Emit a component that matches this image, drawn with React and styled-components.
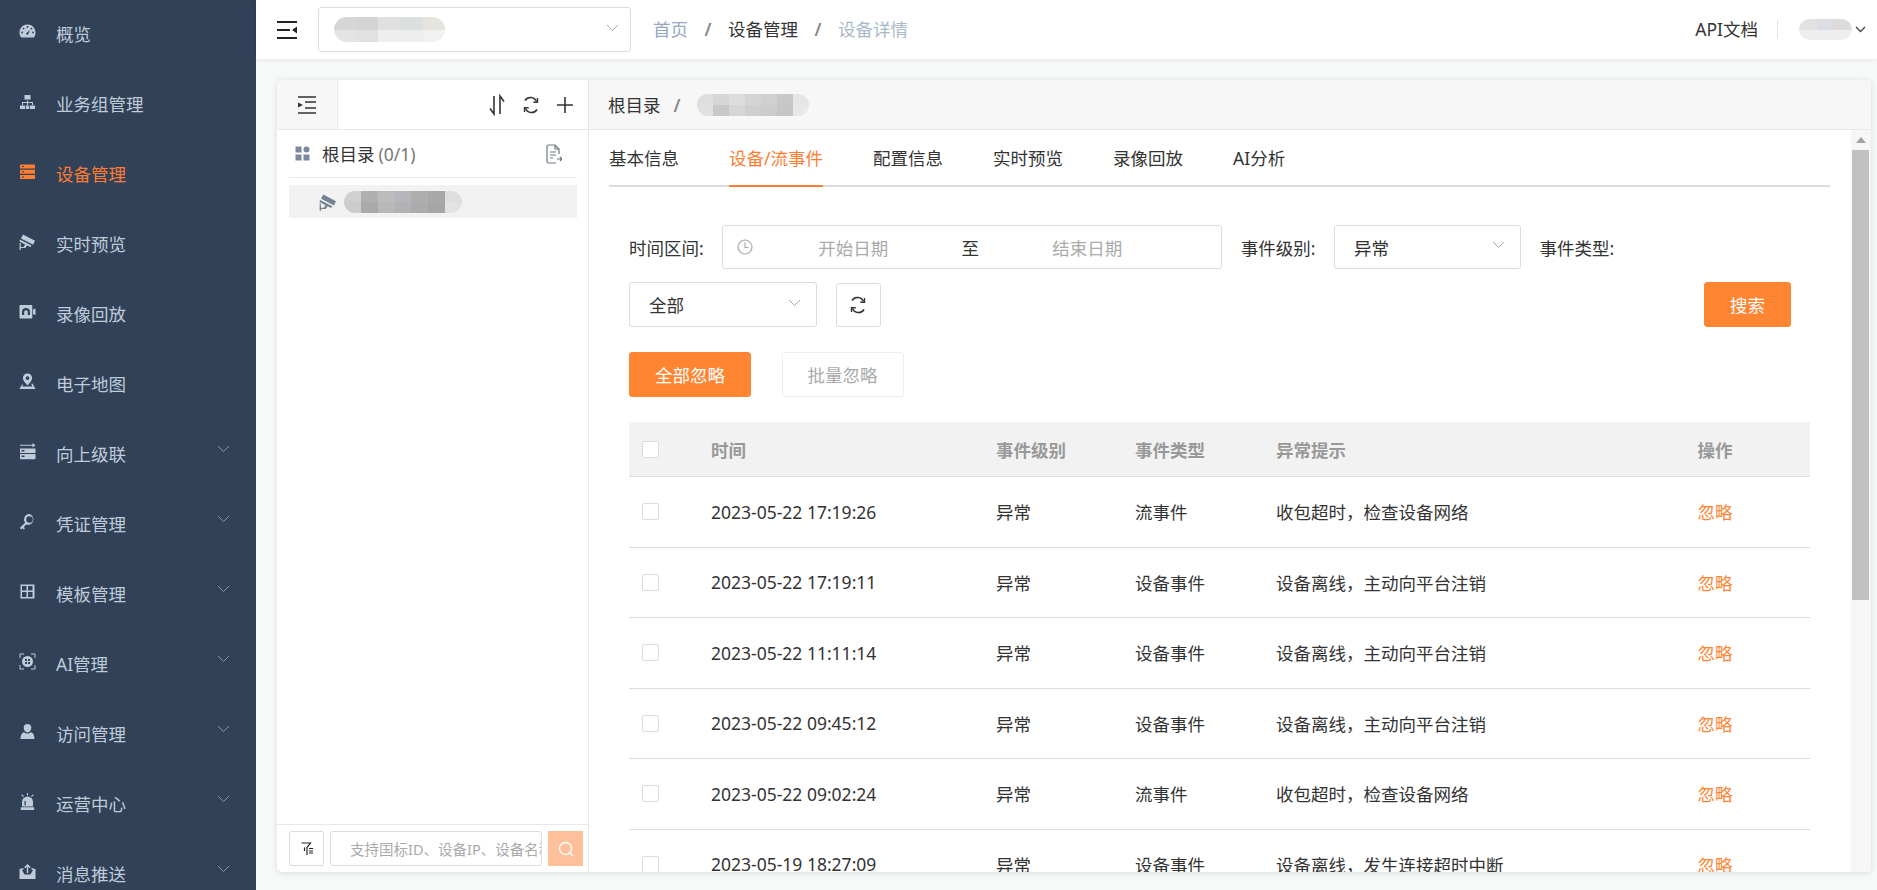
import React from 'react';
import styled, { createGlobalStyle } from 'styled-components';

const GlobalStyle = createGlobalStyle`
  html, body {
    margin: 0;
    height: 100%;
    overflow: hidden;
    background: #f7f8f8;
    font-family: "Noto Sans", "Noto Sans CJK SC", sans-serif;
    font-size: 17.5px;
    color: #333;
  }
  * { box-sizing: border-box; }
`;

const ORANGE = '#ff8533';

/* Page */
const Page = styled.div`
  display: flex;
  width: 100%;
  height: 890px;
  overflow: hidden;
`;

/* Sidebar */
const Sidebar = styled.nav`
  flex: 0 0 256px;
  height: 100%;
  margin: 0;
  padding-top: 0;
  overflow: hidden;
  background: #314158;
`;

const SidebarInner = styled.div`
  margin-top: -2px;
`;

const MenuItem = styled.div`
  position: relative;
  display: flex;
  align-items: center;
  height: 70px;
  padding-left: 19px;
  color: ${(p) => (p.$active ? '#ff7d33' : '#bfcbd9')};
`;

const MenuIcon = styled.svg`
  flex: 0 0 17px;
  width: 17px;
  height: 17px;
  margin-right: 20px;
  margin-top: -4px;
  fill: currentColor;
`;

const MenuArrow = styled.svg`
  position: absolute;
  right: 26px;
  top: 27px;
  width: 13px;
  height: 8px;
  fill: none;
  stroke: #8792a2;
  stroke-width: 1;
`;

/* Main column */
const Main = styled.div`
  flex: 1;
  min-width: 0;
  display: flex;
  flex-direction: column;
`;

const Header = styled.header`
  flex: 0 0 59px;
  display: flex;
  align-items: center;
  padding-left: 21px;
  padding-right: 11px;
  background: #fff;
  box-shadow: 0 1px 4px rgba(0, 21, 41, 0.08);
  z-index: 1;
`;

const HeaderToggle = styled.svg`
  width: 20px;
  height: 18px;
  margin-right: 21px;
  margin-top: 0;
`;

const ProjectSelect = styled.div`
  position: relative;
  width: 313px;
  height: 45px;
  display: flex;
  align-items: center;
  padding-left: 15px;
  margin-right: 22px;
  border: 1px solid #dcdcdc;
  border-radius: 3px;
  background: #fff;
`;

const Crumbs = styled.div`
  display: flex;
  align-items: center;
  gap: 11px;
  margin-top: -2px;
`;

const Crumb = styled.span`
  color: ${(p) => p.$color || '#333'};
`;

const CrumbSep = styled.span`
  width: 18px;
  text-align: center;
  font-weight: 600;
  color: #888;
`;

const HeaderRight = styled.div`
  margin-left: auto;
  display: flex;
  align-items: center;
`;

const DocLink = styled.span`
  margin-top: -2px;
`;

const Divider = styled.span`
  width: 1px;
  height: 19px;
  margin: 0 21px 0 19px;
  background: #dde2e8;
`;

const SmallChevron = styled.svg`
  width: 11px;
  height: 7px;
  margin-left: 3px;
  fill: none;
  stroke: #444;
  stroke-width: 1.3;
`;

const Chevron = styled.svg`
  position: absolute;
  right: ${(p) => p.$right || 15}px;
  top: 50%;
  width: 13px;
  height: 8px;
  margin-top: -6px;
  fill: none;
  stroke: #a9a9a9;
  stroke-width: 1;
`;

/* Smudged (mosaic) private values */
const SmudgeBox = styled.span`
  display: grid;
  grid-template-rows: 1fr 1fr;
  grid-auto-flow: column;
  grid-auto-columns: 1fr;
  width: ${(p) => p.$w}px;
  height: ${(p) => p.$h}px;
  border-radius: ${(p) => p.$h / 2}px;
  overflow: hidden;
  filter: blur(0.6px);
`;

const SmudgeCell = styled.span`
  background: ${(p) => p.$c};
`;

const Smudge = ({ w, h, colors }) => (
  <SmudgeBox $w={w} $h={h}>
    {colors.map((c, i) => <SmudgeCell key={i} $c={c} />)}
  </SmudgeBox>
);

/* Card */
const Content = styled.main`
  flex: 1;
  min-height: 0;
  padding: 21px 6px 18px 21px;
  background: #f7f8f8;
`;

const Card = styled.section`
  display: flex;
  height: 100%;
  border-radius: 5px;
  background: #fff;
  box-shadow: 0 1px 6px rgba(0, 0, 0, 0.12);
  overflow: hidden;
`;

const TreePanel = styled.aside`
  flex: 0 0 312px;
  display: flex;
  flex-direction: column;
  border-right: 1px solid #e8e8e8;
`;

const TreeTools = styled.div`
  flex: 0 0 50px;
  display: flex;
  align-items: center;
  border-bottom: 1px solid #e8e8e8;
`;

const FoldTab = styled.div`
  width: 61px;
  height: 100%;
  display: flex;
  align-items: center;
  justify-content: center;
  background: #f7f7f7;
  border-right: 1px solid #ececec;
`;

const ToolIcon = styled.svg`
  width: ${(p) => p.$w || 20}px;
  height: ${(p) => p.$h || 20}px;
  fill: none;
  stroke: #333;
  stroke-width: 1.6;
`;

const ToolGroup = styled.div`
  margin-left: auto;
  margin-right: 14px;
  display: flex;
  align-items: center;
  gap: 15px;
`;

const TreeBody = styled.div`
  flex: 1;
  min-height: 0;
  padding: 0 11px 0 12px;
`;

const TreeRoot = styled.div`
  display: flex;
  align-items: center;
  height: 48px;
  padding-left: 6px;
  border-bottom: 1px solid #e9e9e9;
`;

const RootGrid = styled.svg`
  width: 15px;
  height: 15px;
  margin-right: 12px;
  fill: #7a8a9c;
`;

const RootCount = styled.span`
  margin-left: 4px;
  color: #777;
`;

const ExportIcon = styled.svg`
  margin-left: auto;
  margin-right: 15px;
  width: 16px;
  height: 20px;
  fill: none;
  stroke: #6b7887;
  stroke-width: 1.2;
`;

const TreeNode = styled.div`
  display: flex;
  align-items: center;
  height: 33px;
  margin-top: 7px;
  padding-left: 30px;
  background: #f2f2f2;
`;

const NodeIcon = styled.svg`
  width: 18px;
  height: 18px;
  margin-right: 7px;
  fill: #738293;
`;

const TreeSearch = styled.div`
  flex: 0 0 48px;
  display: flex;
  align-items: flex-start;
  padding: 6px 5px 0 12px;
  border-top: 1px solid #e8e8e8;
`;

const FilterBtn = styled.div`
  width: 35px;
  height: 35px;
  display: flex;
  align-items: center;
  justify-content: center;
  border: 1px solid #dcdcdc;
  border-radius: 2px;
`;

const SearchInput = styled.div`
  width: 212px;
  height: 35px;
  margin: 0 6px;
  padding: 0 19px;
  display: flex;
  align-items: center;
  overflow: hidden;
  white-space: nowrap;
  font-size: 14.5px;
  color: #aaa;
  border: 1px solid #dcdcdc;
  border-radius: 3px;
`;

const SearchBtn = styled.div`
  width: 35px;
  height: 35px;
  display: flex;
  align-items: center;
  justify-content: center;
  background: #fdc09a;
`;

/* Right side */
const Detail = styled.div`
  flex: 1;
  min-width: 0;
  display: flex;
  flex-direction: column;
`;

const PathBar = styled.div`
  flex: 0 0 50px;
  display: flex;
  align-items: center;
  padding-left: 19px;
  background: #f7f7f7;
  border-bottom: 1px solid #e8e8e8;
`;

const PathSep = styled.span`
  margin: 0 17px 0 13px;
  color: #888;
  font-weight: 600;
`;

const DetailBody = styled.div`
  flex: 1;
  min-height: 0;
  display: flex;
`;

const Scroller = styled.div`
  flex: 1;
  min-width: 0;
  overflow: hidden;
`;

const ScrollTrack = styled.div`
  flex: 0 0 20px;
  padding: 7px 2px 0 1px;
  background: #f6f6f6;
`;

const ScrollUp = styled.div`
  width: 0;
  height: 0;
  margin: 0 auto 7px;
  border-left: 5px solid transparent;
  border-right: 5px solid transparent;
  border-bottom: 6px solid #a3a3a3;
`;

const ScrollThumb = styled.div`
  height: 450px;
  background: #c1c1c1;
`;

const Tabs = styled.div`
  display: flex;
  height: 57px;
  margin: 0 21px 0 20px;
  border-bottom: 2px solid #ddd;
`;

const Tab = styled.div`
  height: 57px;
  margin-right: 50px;
  padding-top: 15px;
  color: ${(p) => (p.$active ? '#ff7d33' : '#333')};
  border-bottom: 2px solid ${(p) => (p.$active ? '#ff7d33' : 'transparent')};
`;

const Pane = styled.div`
  padding: 38px 41px 0 40px;
`;

const FilterRow = styled.div`
  display: flex;
  align-items: center;
  gap: 18.5px;
  height: ${(p) => p.$h}px;
  margin-bottom: ${(p) => p.$mb || 0}px;
`;

const Label = styled.span`
  white-space: nowrap;
`;

const DateRange = styled.div`
  width: 500px;
  height: 44px;
  display: grid;
  grid-template-columns: 38px 184px 50px 184px 1fr;
  align-items: center;
  text-align: center;
  border: 1px solid #dcdcdc;
  border-radius: 3px;
`;

const ClockIcon = styled.svg`
  width: 16px;
  height: 16px;
  margin-left: 14px;
  fill: none;
  stroke: #aaa;
  stroke-width: 1.2;
`;

const Placeholder = styled.span`
  color: #aaa;
`;

const SelectBox = styled.div`
  position: relative;
  width: ${(p) => p.$w}px;
  height: ${(p) => p.$h}px;
  display: flex;
  align-items: center;
  padding-left: 19px;
  border: 1px solid #dcdcdc;
  border-radius: 3px;
`;

const IconButton = styled.div`
  width: 45px;
  height: 44px;
  display: flex;
  align-items: center;
  justify-content: center;
  border: 1px solid #dcdcdc;
  border-radius: 3px;
`;

const Button = styled.div`
  width: ${(p) => p.$w}px;
  height: 45px;
  margin-left: ${(p) => (p.$pushed ? 'auto' : '0')};
  margin-right: ${(p) => p.$mr || 0}px;
  display: flex;
  align-items: center;
  justify-content: center;
  border-radius: 3px;
  color: ${(p) => (p.$primary ? '#fff' : '#aaa')};
  background: ${(p) => (p.$primary ? ORANGE : '#fff')};
  border: 1px solid ${(p) => (p.$primary ? ORANGE : '#eee')};
`;

/* Table */
const TableGrid = styled.div`
  display: grid;
  grid-template-columns: 82px 285px 139px 141px 421.5px 1fr;
  align-items: center;
`;

const TableHead = styled(TableGrid)`
  height: 55px;
  background: #f2f2f2;
  border-bottom: 1px solid #ddd;
  font-weight: 700;
  color: #999;
`;

const TableRow = styled(TableGrid)`
  height: 70.5px;
  border-bottom: 1px solid #ddd;
`;

const CheckBox = styled.span`
  display: block;
  width: 17px;
  height: 17px;
  margin-left: 13px;
  background: #fff;
  border: 1px solid #dcdcdc;
  border-radius: 2px;
`;

const IgnoreLink = styled.span`
  color: #ff8533;
`;

const paths = {
  gauge: (
    <>
      <path d="M8.5 1.5C4.1 1.5.5 5 .5 9.4c0 1.9.6 3.6 1.7 5h12.6c1.1-1.4 1.7-3.1 1.7-5 0-4.4-3.6-7.9-8-7.9z" />
      <g fill="#314158">
        <circle cx="8.5" cy="4" r=".9" />
        <circle cx="4.6" cy="5.6" r=".9" />
        <circle cx="12.4" cy="5.6" r=".9" />
        <circle cx="3" cy="9.4" r=".9" />
        <circle cx="14" cy="9.4" r=".9" />
        <path d="M7.2 10.3l3.8-3.3-2 4.5a1.2 1.2 0 0 1-1.8-1.2z" />
      </g>
    </>
  ),
  org: <path d="M5.5 2h6v4.5h-6zM8 7.5h1V9h5v3h-1v-2H9v2H8v-2H4v2H3V9h5zM1 12.5h5V16H1zM6.8 12.5h3.4V16H6.8zM11 12.5h5V16h-5z" />,
  server: <path d="M1.5 1.5h14a.5.5 0 0 1 .5.5v3.5H1V2a.5.5 0 0 1 .5-.5zM1 6.7h15v4H1zM1 11.9h15v3.6a.5.5 0 0 1-.5.5h-14a.5.5 0 0 1-.5-.5zM3 3v1h2V3zM3 8.2v1h2v-1zM3 13.4v1h2v-1z" fillRule="evenodd" />,
  cctv: <path d="M4 1.5l12 6.3-1.9 4L2 5.5zM1 6.5l11.5 6-1 1.6-3.4-1.7-1.8 2.6H1.8V17H.6v-7h1.2v4h2.8l1.5-2.4L.5 8.6z" />,
  record: <path d="M1.5 2h10.8c.6 0 1 .4 1 1v11.5c0 .6-.4 1-1 1H1.5c-.6 0-1-.4-1-1V3c0-.6.4-1 1-1zM14 6.5l2.5-1v6.7L14 11zM7 5a4 4 0 0 0-4 4v3h2.2V9a1.8 1.8 0 0 1 3.6 0v3H11V9a4 4 0 0 0-4-4z" fillRule="evenodd" />,
  map: <path d="M8.5.5a4.6 4.6 0 0 0-4.6 4.6c0 2.6 2.9 5.6 4.6 7.4 1.7-1.8 4.6-4.8 4.6-7.4A4.6 4.6 0 0 0 8.5.5zm0 2.7a1.9 1.9 0 1 1 0 3.8 1.9 1.9 0 0 1 0-3.8zM3.5 10.5l-3 5.5h16l-3-5.5-1.4.3 1.3 2.7H8.5L3.6 13.5z" fillRule="evenodd" />,
  cascade: <path d="M1 1.7h12.5V0l3 2.2-3 2.2V2.8H1zM1 5.5h15.5v4.5H1zM1 11h15.5v4.5a.8.8 0 0 1-.8.8H1.8a.8.8 0 0 1-.8-.8zM2.5 7v1.4h3V7zM2.5 12.5v1.4h3v-1.4z" fillRule="evenodd" />,
  key: <path d="M10.5 1a5.5 5.5 0 0 0-4.4 8.8L.8 15l1.5 1.5 1.2-1.2 1.2 1.2 1.3-1.3-1.2-1.2 2.4-2.4A5.5 5.5 0 1 0 10.5 1zm0 2.2a3.3 3.3 0 1 1 0 6.6 3.3 3.3 0 0 1 0-6.6z" fillRule="evenodd" />,
  template: <path d="M1.5 1.5h14v14h-14zM3 3v4.5h4.5V3zM9 3v4.5h4.5V3zM3 9v5h4.5V9zM9 9v5h4.5V9z" fillRule="evenodd" />,
  ai: (
    <>
      <path d="M.5 5V1.2C.5.8.8.5 1.2.5H5v1H1.5V5zM12 .5h3.8c.4 0 .7.3.7.7V5h-1V1.5H12zM.5 12v3.8c0 .4.3.7.7.7H5v-1H1.5V12zM16.5 12v3.8c0 .4-.3.7-.7.7H12v-1h3.5V12z" />
      <path d="M8.5 3a5.5 5.5 0 1 0 0 11 5.5 5.5 0 0 0 0-11zM6 6h2v2H6zm3 0h2v2H9zM6 9h2v2H6zm3 0h2v2H9z" fillRule="evenodd" />
    </>
  ),
  user: <path d="M8.5 1a3.8 3.8 0 0 1 3.8 3.8c0 2.6-1.7 4.6-3.8 4.6S4.7 7.4 4.7 4.8A3.8 3.8 0 0 1 8.5 1zM5 9.3c1 .8 2.200 1.300 3.500 1.300s2.500-.5 3.500-1.300c2 .7 3.400 2.500 3.500 6.700h-14c.1-4.200 1.500-6 3.500-6.700z" />,
  alarm: <path d="M8 0h1v2.500H8zM2.300 2l.8-.7L5 3.200l-.8.7zM14.700 2l-.8-.7L12 3.200l.8.7zM8.500 3.500A5.500 5.500 0 0 1 14 9v4.500H3V9a5.500 5.500 0 0 1 5.500-5.500zM5.500 8v4.300h1.300V8zM1.800 14.300h13.400V17H1.800z" fillRule="evenodd" />,
  push: <path d="M8.500 1l3.300 3.300-1 .9L9.200 3.700V10H7.800V3.700L6.200 5.200l-1-.9zM.5 6l4-.9v1.400L3 7l2.500 4.500h6L14 7l-1.500-.5V5.100l4 .9v10H.5z" />,
};

const menu = [
  ['gauge', '概览'],
  ['org', '业务组管理'],
  ['server', '设备管理', true],
  ['cctv', '实时预览'],
  ['record', '录像回放'],
  ['map', '电子地图'],
  ['cascade', '向上级联', false, true],
  ['key', '凭证管理', false, true],
  ['template', '模板管理', false, true],
  ['ai', 'AI管理', false, true],
  ['user', '访问管理', false, true],
  ['alarm', '运营中心', false, true],
  ['push', '消息推送', false, true],
];

const rows = [
  ['2023-05-22 17:19:26', '流事件', '收包超时，检查设备网络'],
  ['2023-05-22 17:19:11', '设备事件', '设备离线，主动向平台注销'],
  ['2023-05-22 11:11:14', '设备事件', '设备离线，主动向平台注销'],
  ['2023-05-22 09:45:12', '设备事件', '设备离线，主动向平台注销'],
  ['2023-05-22 09:02:24', '流事件', '收包超时，检查设备网络'],
  ['2023-05-19 18:27:09', '设备事件', '设备离线，发生连接超时中断'],
];

const tabs = ['基本信息', '设备/流事件', '配置信息', '实时预览', '录像回放', 'AI分析'];

const ChevronPath = () => <path d="M1 1l5.500 5.500L12 1" />;

const RefreshPath = () => (
  <>
    <path d="M15.500 6.500A6.500 6.500 0 0 0 4 5.500M4.500 13.500A6.500 6.500 0 0 0 16 14.500" />
    <path d="M16.500 3v4.200h-4.200M3.500 17v-4.200h4.200" strokeWidth="1.400" />
  </>
);

const App = () => (
  <Page>
    <GlobalStyle />
    <Sidebar>
      <SidebarInner>
        {menu.map(([icon, label, active, more]) => (
          <MenuItem key={label} $active={active}>
            <MenuIcon viewBox="0 0 17 17">{paths[icon]}</MenuIcon>
            {label}
            {more && <MenuArrow viewBox="0 0 13 8"><ChevronPath /></MenuArrow>}
          </MenuItem>
        ))}
      </SidebarInner>
    </Sidebar>
    <Main>
      <Header>
        <HeaderToggle viewBox="0 0 20 18" fill="#222">
          <path d="M0 0h20v2H0zM0 8h13v2H0zM0 16h20v2H0zM15 9l5-3.500v7z" />
        </HeaderToggle>
        <ProjectSelect>
          <Smudge w={111} h={25} colors={['#d6d6d6', '#e4e4e4', '#d4d4d4', '#e0e2e2', '#e0e0e0', '#eeeeee', '#dcdfe0', '#eeeeee', '#e6e4df', '#f1f1f1']} />
          <Chevron viewBox="0 0 13 8" $right={11}><ChevronPath /></Chevron>
        </ProjectSelect>
        <Crumbs>
          <Crumb $color="#97a8be">首页</Crumb>
          <CrumbSep>/</CrumbSep>
          <Crumb>设备管理</Crumb>
          <CrumbSep>/</CrumbSep>
          <Crumb $color="#a9b7c9">设备详情</Crumb>
        </Crumbs>
        <HeaderRight>
          <DocLink>API文档</DocLink>
          <Divider />
          <Smudge w={53} h={21} colors={['#e2e2e2', '#eeeeee', '#dadde2', '#eeeeee', '#dedcda', '#eeeeee']} />
          <SmallChevron viewBox="0 0 11 7"><path d="M1 1l4.500 4.500L10 1" /></SmallChevron>
        </HeaderRight>
      </Header>
      <Content>
        <Card>
          <TreePanel>
            <TreeTools>
              <FoldTab>
                <ToolIcon viewBox="0 0 20 18" $h={18}>
                  <path d="M1 1h18M8 6h11M8 12h11M1 17h18" />
                  <path d="M1 6.500l5 2.500-5 2.500z" fill="#333" stroke="none" />
                </ToolIcon>
              </FoldTab>
              <ToolGroup>
                <ToolIcon viewBox="0 0 18 22" $w={18} $h={22} strokeWidth="1.300">
                  <path d="M6 2v18L2 14.500M12 20V2l4 5.500" />
                </ToolIcon>
                <ToolIcon viewBox="0 0 20 20"><RefreshPath /></ToolIcon>
                <ToolIcon viewBox="0 0 18 18" $w={18} $h={18} strokeWidth="2"><path d="M9 1v16M1 9h16" /></ToolIcon>
              </ToolGroup>
            </TreeTools>
            <TreeBody>
              <TreeRoot>
                <RootGrid viewBox="0 0 15 15">
                  <path d="M.5.500h6v6h-6zM.5 8.500h6v6h-6zM8.500 8.500h6v6h-6z" />
                  <circle cx="11.500" cy="3.500" r="3" />
                </RootGrid>
                根目录<RootCount>(0/1)</RootCount>
                <ExportIcon viewBox="0 0 16 20">
                  <path d="M13 10V5L9 1H2.500A1.500 1.500 0 0 0 1 2.500v15A1.500 1.500 0 0 0 2.500 19H10M9 1v4h4M4 8h6M4 11h6M4 14h3M11 15h5M14 13l2 2-2 2" />
                </ExportIcon>
              </TreeRoot>
              <TreeNode>
                <NodeIcon viewBox="0 0 17 17">{paths.cctv}</NodeIcon>
                <Smudge w={118} h={22} colors={['#d0d0d0', '#cccccc', '#b0b0b0', '#aaaaaa', '#bcbcbc', '#b8b8b8', '#b6b6bc', '#b2b2b6', '#aeaeae', '#acacac', '#a8a8a8', '#a6a6a6', '#dedede', '#e2e2e2']} />
              </TreeNode>
            </TreeBody>
            <TreeSearch>
              <FilterBtn>
                <svg width="12" height="14" viewBox="0 0 12 14" fill="none" stroke="#222" strokeWidth="1.200">
                  <path d="M.5 1h9L6 5.500V13M3.500 5.500V9M8 6.500h4M8 9h4M8 11h4" />
                </svg>
              </FilterBtn>
              <SearchInput>支持国标ID、设备IP、设备名称</SearchInput>
              <SearchBtn>
                <svg width="16" height="16" viewBox="0 0 16 16" fill="none" stroke="#fff" strokeWidth="1.300">
                  <circle cx="7.500" cy="7.500" r="6" />
                  <path d="M12 12l3 3" />
                </svg>
              </SearchBtn>
            </TreeSearch>
          </TreePanel>
          <Detail>
            <PathBar>
              根目录
              <PathSep>/</PathSep>
              <Smudge w={112} h={22} colors={['#dedede', '#e0e0e0', '#d6d6d6', '#c8c8c8', '#dddddd', '#d6d6d6', '#d4d4d4', '#cfcfd2', '#d0d0d0', '#cccccc', '#c8c8c8', '#c6c6c6', '#e6e6e6', '#e8e8e8']} />
            </PathBar>
            <DetailBody>
              <Scroller>
                <Tabs>
                  {tabs.map((t) => <Tab key={t} $active={t === '设备/流事件'}>{t}</Tab>)}
                </Tabs>
                <Pane>
                  <FilterRow $h={44} $mb={13}>
                    <Label>时间区间:</Label>
                    <DateRange>
                      <ClockIcon viewBox="0 0 16 16">
                        <circle cx="8" cy="8" r="7" />
                        <path d="M8 3.500V8.500H11.500" />
                      </ClockIcon>
                      <Placeholder>开始日期</Placeholder>
                      <span>至</span>
                      <Placeholder>结束日期</Placeholder>
                    </DateRange>
                    <Label>事件级别:</Label>
                    <SelectBox $w={187} $h={44}>
                      异常
                      <Chevron viewBox="0 0 13 8"><ChevronPath /></Chevron>
                    </SelectBox>
                    <Label>事件类型:</Label>
                  </FilterRow>
                  <FilterRow $h={45} $mb={25}>
                    <SelectBox $w={188} $h={45}>
                      全部
                      <Chevron viewBox="0 0 13 8"><ChevronPath /></Chevron>
                    </SelectBox>
                    <IconButton>
                      <ToolIcon viewBox="0 0 20 20"><RefreshPath /></ToolIcon>
                    </IconButton>
                    <Button $w={87} $primary $pushed $mr={19}>搜索</Button>
                  </FilterRow>
                  <FilterRow $h={45} $mb={25}>
                    <Button $w={122} $primary>全部忽略</Button>
                    <Button $w={122} style={{ marginLeft: 12 }}>批量忽略</Button>
                  </FilterRow>
                  <TableHead>
                    <CheckBox />
                    <span>时间</span>
                    <span>事件级别</span>
                    <span>事件类型</span>
                    <span>异常提示</span>
                    <span>操作</span>
                  </TableHead>
                  {rows.map(([time, type, tip]) => (
                    <TableRow key={time}>
                      <CheckBox />
                      <span>{time}</span>
                      <span>异常</span>
                      <span>{type}</span>
                      <span>{tip}</span>
                      <IgnoreLink>忽略</IgnoreLink>
                    </TableRow>
                  ))}
                </Pane>
              </Scroller>
              <ScrollTrack>
                <ScrollUp />
                <ScrollThumb />
              </ScrollTrack>
            </DetailBody>
          </Detail>
        </Card>
      </Content>
    </Main>
  </Page>
);

export default App;
